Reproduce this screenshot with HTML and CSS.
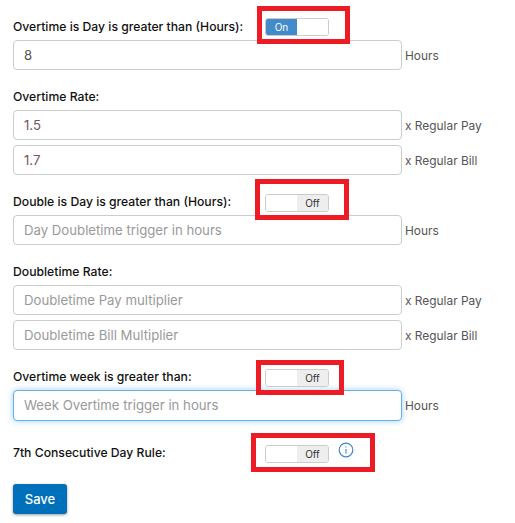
FILE: index.html
```html
<html>
  <head>
    <title>Overtime settings</title>
    <link rel="stylesheet" href="styles.css">
  </head>
  <body>
    <form class="form">
      <div class="label-row r1">
        <label class="lbl">Overtime is Day is greater than (Hours):</label>
        <div class="mark m1"><div class="toggle"><span class="on">On</span><span class="blank"></span></div></div>
      </div>
      <div class="field">
        <input class="inp" value="8"><span class="unit">Hours</span>
      </div>

      <div class="label-row r2"><label class="lbl">Overtime Rate:</label></div>
      <div class="field">
        <input class="inp val" value="1.5"><span class="unit">x Regular Pay</span>
      </div>
      <div class="field f2">
        <input class="inp val" value="1.7"><span class="unit">x Regular Bill</span>
      </div>

      <div class="label-row r3">
        <label class="lbl">Double is Day is greater than (Hours):</label>
        <div class="mark m2"><div class="toggle"><span class="blank"></span><span class="off">Off</span></div></div>
      </div>
      <div class="field">
        <input class="inp" placeholder="Day Doubletime trigger in hours"><span class="unit">Hours</span>
      </div>

      <div class="label-row r4"><label class="lbl">Doubletime Rate:</label></div>
      <div class="field">
        <input class="inp" placeholder="Doubletime Pay multiplier"><span class="unit">x Regular Pay</span>
      </div>
      <div class="field f2">
        <input class="inp" placeholder="Doubletime Bill Multiplier"><span class="unit">x Regular Bill</span>
      </div>

      <div class="label-row r5">
        <label class="lbl">Overtime week is greater than:</label>
        <div class="mark m3"><div class="toggle"><span class="blank"></span><span class="off">Off</span></div></div>
      </div>
      <div class="field">
        <input class="inp focus" placeholder="Week Overtime trigger in hours"><span class="unit">Hours</span>
      </div>

      <div class="label-row r6">
        <label class="lbl">7th Consecutive Day Rule:</label>
        <div class="mark m4">
          <div class="toggle"><span class="blank"></span><span class="off">Off</span></div>
          <svg class="info" width="16" height="16" viewBox="0 0 16 16"><circle cx="8" cy="8" r="6.8" fill="none" stroke="#3f86d0" stroke-width="1.2"/><path d="M8 4.4v1M8 7v4.4" fill="none" stroke="#3f86d0" stroke-width="1.1"/></svg>
        </div>
      </div>

      <button type="button" class="save">Save</button>
    </form>
  </body>
</html>
```

FILE: styles.css
```css
body { margin: 0; background: #fff; font-family: "Inter", "Liberation Sans", sans-serif; font-size: 12px; color: #111; }
.form { padding: 0 0 0 13px; }

.label-row { display: flex; align-items: center; height: 14px; }
.lbl { font-weight: 500; font-size: 12.2px; white-space: nowrap; color: #111; }
.r1 { margin-top: 19px; margin-bottom: 7px; }
.r2 { margin-top: 19px; margin-bottom: 7px; }
.r3 { margin-top: 19px; margin-bottom: 7px; }
.r4 { margin-top: 19px; margin-bottom: 7px; }
.r5 { margin-top: 19px; margin-bottom: 7px; }
.r6 { margin-top: 25px; margin-bottom: 25px; }

.mark { display: flex; align-items: center; flex: none; border: 5px solid #ed1c24; box-sizing: border-box; position: absolute; }
.m1 { left: 257px; top: 6px; width: 93px; height: 38px; padding: 4px 0 0 3px; }
.m2 { left: 255px; top: 179px; width: 94px; height: 41px; padding: 6px 0 0 5px; }
.m3 { left: 256px; top: 360px; width: 88px; height: 35px; padding-left: 4px; }
.m4 { left: 251px; top: 433px; width: 124px; height: 39px; padding: 2px 0 0 9px; }

.toggle { display: flex; width: 64px; height: 18px; border: 1px solid #ccc; border-radius: 3px; overflow: hidden; font-size: 10px; line-height: 16px; text-align: center; flex: none; box-sizing: border-box; }
.toggle span { width: 50%; }
.on { background: #428bca; color: #fff; }
.off { background: #eee; color: #333; }
.blank { background: #fff; }
.info { margin-left: 9px; margin-top: -8px; }

.field { display: flex; align-items: center; height: 30px; }
.f2 { margin-top: 5px; }
.inp { width: 389px; height: 30px; box-sizing: border-box; border: 1px solid #ccc; border-radius: 4px; padding: 0 10px; font-family: inherit; font-size: 13.2px; color: #555; outline: none; background: #fff; }
.inp::placeholder { color: #999; opacity: 1; }
.val { color: #7a5560; }
.focus { border-color: #66afe9; box-shadow: 0 0 6px rgba(102, 175, 233, .6); height: 31px; }
.unit { margin-left: 3px; font-size: 11.9px; color: #555; white-space: nowrap; }

.save { display: block; width: 54px; height: 30px; border: 0; border-radius: 3px; background: #0070ba; color: #fff; font-family: inherit; font-size: 13px; font-weight: 500; box-shadow: 0 1px 3px rgba(0, 0, 0, .4); padding: 0; }
```
